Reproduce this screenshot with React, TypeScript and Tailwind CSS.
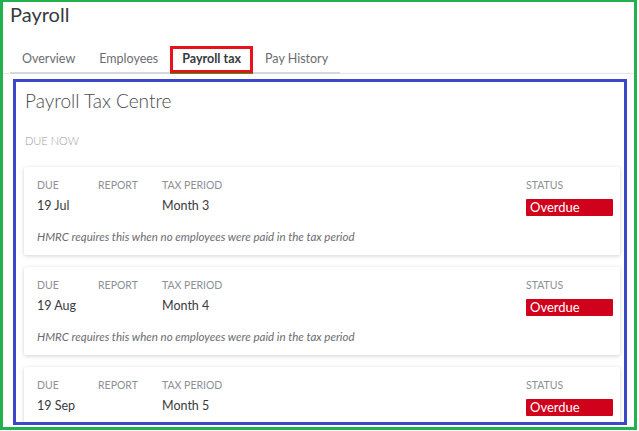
const TABS = ["Overview", "Employees", "Payroll tax", "Pay History"] as const;

const FILINGS = [
  { due: "19 Jul", period: "Month 3" },
  { due: "19 Aug", period: "Month 4" },
  { due: "19 Sep", period: "Month 5" },
] as const;

function FilingCard({ due, period }: { due: string; period: string }) {
  return (
    <div className="rounded-[2px] bg-white pt-[11px] pb-[11px] pl-[13px] pr-[7px] shadow-[0_1px_4px_rgba(0,0,0,0.18)]">
      <div className="flex">
        <div className="w-[61px] shrink-0">
          <div className="text-[10.5px] leading-[14px] text-[#8d9096]">DUE</div>
          <div className="mt-[5px] text-[12.5px] leading-[18px] text-[#393a3d]">{due}</div>
        </div>
        <div className="w-[64px] shrink-0">
          <div className="text-[10.5px] leading-[14px] text-[#8d9096]">REPORT</div>
        </div>
        <div className="flex-1">
          <div className="text-[10.5px] leading-[14px] text-[#8d9096]">TAX PERIOD</div>
          <div className="mt-[5px] text-[12.5px] leading-[18px] text-[#393a3d]">{period}</div>
        </div>
        <div className="w-[87px] shrink-0">
          <div className="text-[10.5px] leading-[14px] text-[#8d9096]">STATUS</div>
          <div className="mt-[7px] h-[17px] rounded-[1px] bg-[#d0011b] pl-[4px] text-[13px] leading-[17px] text-white">
            Overdue
          </div>
        </div>
      </div>
      <p className="mt-[14px] text-[11.5px] italic leading-[14px] text-[#6b6c72]">
        HMRC requires this when no employees were paid in the tax period
      </p>
    </div>
  );
}

export default function App() {
  return (
    <div className="h-[431px] w-[639px] overflow-hidden bg-white font-['Lato',sans-serif] shadow-[1px_1px_0_#d8d8d8]">
      <div className="flex h-[430px] w-[637px] flex-col border-[3px] border-t-2 border-[#22b14c]">
        <h1 className="pl-[7px] text-[20px] leading-[24px] text-[#393a3d]">Payroll</h1>

        <div className="mt-[20px] border-b border-[#e3e5e8]">
          <div className="-mb-px ml-[7px] flex w-fit border-b-2 border-[#d4d7dc]">
            {TABS.map((tab) => {
              const active = tab === "Payroll tax";
              return (
                <div
                  key={tab}
                  className={
                    active
                      ? "relative -mb-[2px] border-b-2 border-[#2ca01c] px-[12px] text-[12.5px] font-bold leading-[26px] text-[#393a3d]"
                      : "px-[12px] text-[12.5px] leading-[26px] text-[#6b6c72]"
                  }
                >
                  {tab}
                  {active && (
                    <span className="pointer-events-none absolute -bottom-px left-0 right-0 top-0 border-[3px] border-[#e8121c]" />
                  )}
                </div>
              );
            })}
          </div>
        </div>

        <section className="mt-[5px] ml-[10px] h-[346px] w-[614px] overflow-hidden border-[3px] border-[#3b48c9] pl-[8px] pr-[4px] pt-[7px]">
          <h2 className="pl-px text-[19px] font-light leading-[24px] text-[#4a4b50]">Payroll Tax Centre</h2>
          <div className="mt-[21px] pl-px text-[11px] font-light leading-[14px] text-[#9a9ca0]">DUE NOW</div>
          <div className="mt-[19px] flex flex-col gap-[12px]">
            {FILINGS.map((f) => (
              <FilingCard key={f.due} due={f.due} period={f.period} />
            ))}
          </div>
        </section>
      </div>
    </div>
  );
}
